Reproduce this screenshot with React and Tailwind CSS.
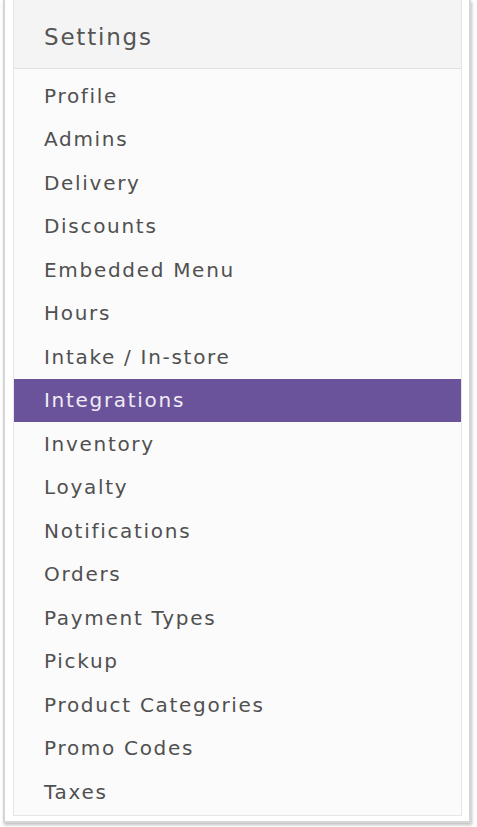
export default function App() {
  const items = [
    "Profile",
    "Admins",
    "Delivery",
    "Discounts",
    "Embedded Menu",
    "Hours",
    "Intake / In-store",
    "Integrations",
    "Inventory",
    "Loyalty",
    "Notifications",
    "Orders",
    "Payment Types",
    "Pickup",
    "Product Categories",
    "Promo Codes",
    "Taxes",
  ];
  return (
    <div className="w-[477px] h-[827px] bg-white" style={{ fontFamily: "'DejaVu Sans', Lato, sans-serif" }}>
      <div className="ml-[3px] w-[468px] h-[823px] border-l-2 border-r-2 border-b-2 border-[#d6d6d6] shadow-[1px_2px_3px_rgba(0,0,0,0.25)] bg-white pl-[8px] pr-[7px] pb-[5px]">
        <div className="h-full border-l border-r border-b border-[#e6e6e6] bg-[#fbfbfb] flex flex-col">
          <div className="h-[69px] bg-[#f4f4f4] border-b border-[#e2e2e2] flex items-center pt-[7px] pl-[30px] text-[23px] text-[#555555] tracking-[1.8px]">
            Settings
          </div>
          <div className="flex flex-col pt-[5px]">
            {items.map((it) => (
              <div
                key={it}
                className={
                  it === "Integrations"
                    ? "h-[43.5px] flex items-center pl-[30px] text-[20px] tracking-[1.7px] bg-[#6a539a] text-[#f0ecf6]"
                    : "h-[43.5px] flex items-center pl-[30px] text-[20px] tracking-[1.7px] text-[#505050]"
                }
              >
                {it}
              </div>
            ))}
          </div>
        </div>
      </div>
    </div>
  );
}
